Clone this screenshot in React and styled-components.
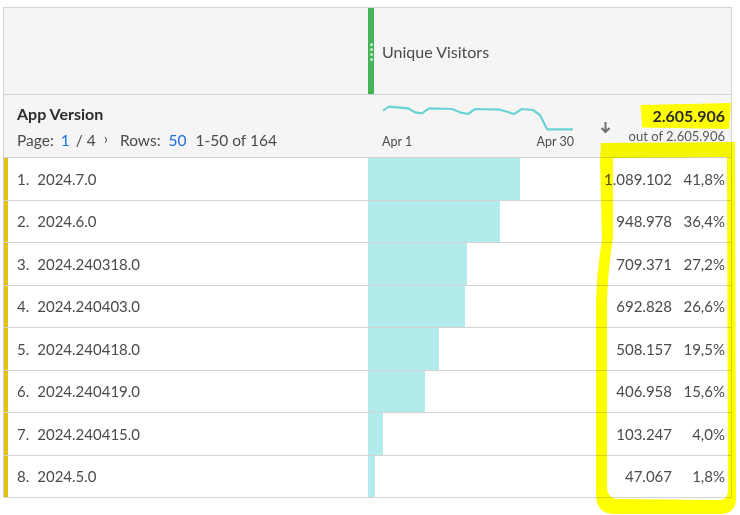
import React from "react";
import styled, { createGlobalStyle } from "styled-components";

const GlobalStyle = createGlobalStyle`
  html, body {
    margin: 0;
    padding: 0;
    background: #ffffff;
  }
  body {
    font-family: "Lato", "Open Sans", sans-serif;
    color: #4b4b4b;
  }
`;

const Page = styled.div`
  position: relative;
  width: 740px;
  height: 515px;
  padding: 7px 0 0 3px;
  box-sizing: border-box;
  overflow: hidden;
`;

const Table = styled.div`
  width: 729px;
  border: 1px solid #d3d3d3;
  border-bottom: none;
  box-sizing: border-box;
`;

const HeaderRow = styled.div`
  display: grid;
  grid-template-columns: 364px 1fr;
  height: ${(p) => p.$h}px;
  background: #f5f5f5;
  border-bottom: 1px solid #d3d3d3;
  box-sizing: content-box;
`;

const MetricTitle = styled.div`
  display: flex;
  align-items: center;
  border-left: 6px solid #44b556;
  position: relative;
  padding-left: 8px;
  font-size: 16px;
  color: #4b4b4b;
`;

const Grip = styled.span`
  position: absolute;
  left: -4px;
  top: 35px;
  display: flex;
  flex-direction: column;
  gap: 2px;

  i {
    display: block;
    width: 3px;
    height: 3px;
    border-radius: 50%;
    background: #c9ecce;
  }
`;

const DimensionCell = styled.div`
  display: flex;
  flex-direction: column;
  padding: 9px 0 0 13px;
  gap: 8px;
`;

const DimensionName = styled.div`
  font-size: 16px;
  font-weight: 700;
  color: #2c2c2c;
`;

const Pager = styled.div`
  font-size: 15.5px;
  color: #4b4b4b;
  display: flex;
  align-items: center;
  white-space: pre;
`;

const Link = styled.span`
  color: #1a6fe0;
  margin: ${(p) => p.$m || "0"};
`;

const Chevron = styled.span`
  font-size: 15px;
  margin: 0 12px 0 8px;
  position: relative;
  top: -2px;
`;

const TotalsCell = styled.div`
  display: flex;
  align-items: flex-start;
  padding: 0 6px 0 14px;
`;

const Spark = styled.div`
  width: 192px;
  display: flex;
  flex-direction: column;
  padding-top: 9px;
`;

const SparkDates = styled.div`
  display: flex;
  justify-content: space-between;
  font-size: 12.5px;
  color: #4b4b4b;
  margin-top: 3px;
`;

const SortArrow = styled.div`
  margin-left: 26px;
  margin-top: 26px;
  color: #6e6e6e;
  display: flex;
`;

const Totals = styled.div`
  margin-left: auto;
  display: flex;
  flex-direction: column;
  align-items: flex-end;
  padding-top: 8px;
`;

const TotalValue = styled.span`
  font-size: 16px;
  font-weight: 700;
  color: #2c2c2c;
  background: #ffff00;
  padding: 3px 6px 4px 12px;
  margin-right: -6px;
  clip-path: polygon(0 8%, 100% 0, 98% 100%, 2% 94%);
`;

const TotalOf = styled.span`
  font-size: 13px;
  color: #5a5a5a;
  margin-top: -1px;
`;

const Row = styled.div`
  display: grid;
  grid-template-columns: 364px 1fr;
  height: 42.5px;
  box-sizing: border-box;
  border-bottom: 1px solid #d3d3d3;
  background: #ffffff;
`;

const Label = styled.div`
  display: flex;
  align-items: center;
  border-left: 4px solid #e2c314;
  padding-left: 9px;
  font-size: 15px;
  color: #4b4b4b;
`;

const Ordinal = styled.span`
  margin-right: 8px;
`;

const ValueCell = styled.div`
  display: flex;
  align-items: stretch;
`;

const Bar = styled.div`
  flex: none;
  background: #b1ebeb;
`;

const Numbers = styled.div`
  margin-left: auto;
  display: flex;
  align-items: center;
  font-size: 15px;
  color: #4b4b4b;
  padding-right: 6px;
`;

const Percent = styled.span`
  width: 53px;
  text-align: right;
`;

const Overlay = styled.svg`
  position: absolute;
  left: 0;
  top: 0;
  pointer-events: none;
  mix-blend-mode: multiply;
`;

const rows = [
  ["2024.7.0", "1.089.102", 41.8],
  ["2024.6.0", "948.978", 36.4],
  ["2024.240318.0", "709.371", 27.2],
  ["2024.240403.0", "692.828", 26.6],
  ["2024.240418.0", "508.157", 19.5],
  ["2024.240419.0", "406.958", 15.6],
  ["2024.240415.0", "103.247", 4.0],
  ["2024.5.0", "47.067", 1.8],
];

const sparkPoints = [
  [1, 6.7], [7, 2.7], [26, 4.3], [33, 8.3], [40, 9.3], [47, 4.3], [70, 5],
  [78, 8.3], [86, 10], [93, 5], [118, 5.7], [125, 7.7], [132, 10], [140, 5],
  [151, 6], [158, 11], [165, 25.3], [191, 25.3],
];

const fmtPct = (v) => v.toFixed(1).replace(".", ",") + "%";

const App = () => {
  return (
    <>
      <GlobalStyle />
      <Page>
        <Table>
          <HeaderRow $h={86}>
            <div />
            <MetricTitle>
              <Grip>
                <i />
                <i />
                <i />
                <i />
              </Grip>
              Unique Visitors
            </MetricTitle>
          </HeaderRow>
          <HeaderRow $h={62}>
            <DimensionCell>
              <DimensionName>App Version</DimensionName>
              <Pager>
                Page:<Link $m="0 6px 0 7px">1</Link>/ 4<Chevron>›</Chevron>Rows:<Link $m="0 9px 0 8px">50</Link>1-50 of 164
              </Pager>
            </DimensionCell>
            <TotalsCell>
              <Spark>
                <svg width="192" height="27" viewBox="0 0 192 27">
                  <polyline
                    points={sparkPoints.map((p) => p.join(",")).join(" ")}
                    fill="none"
                    stroke="#6cd3d4"
                    strokeWidth="2.2"
                    strokeLinejoin="round"
                  />
                </svg>
                <SparkDates>
                  <span>Apr 1</span>
                  <span>Apr 30</span>
                </SparkDates>
              </Spark>
              <SortArrow>
                <svg width="11" height="13" viewBox="0 0 11 13">
                  <path d="M5.5 1v10M1.5 7l4 4 4-4" fill="none" stroke="#6e6e6e" strokeWidth="2" />
                </svg>
              </SortArrow>
              <Totals>
                <TotalValue>2.605.906</TotalValue>
                <TotalOf>out of 2.605.906</TotalOf>
              </Totals>
            </TotalsCell>
          </HeaderRow>
          {rows.map(([name, value, pct], i) => (
            <Row key={name}>
              <Label>
                <Ordinal>{i + 1}.</Ordinal>
                {name}
              </Label>
              <ValueCell>
                <Bar style={{ width: `${pct}%` }} />
                <Numbers>
                  <span>{value}</span>
                  <Percent>{fmtPct(pct)}</Percent>
                </Numbers>
              </ValueCell>
            </Row>
          ))}
        </Table>
        <Overlay width="740" height="515" viewBox="0 0 740 515">
          <path
            fillRule="evenodd"
            fill="#ffff00"
            d="M601 143 L735 142 L736 500 Q735 514 720 514 L612 514 Q596 512 596 495 L596 300 Q597 270 602 240 L600 160 Z
               M613 158 L727 157 L728 492 Q727 500 719 500 L616 499 Q607 497 607 487 L607 300 Q608 268 613 238 L613 166 Z"
          />
        </Overlay>
      </Page>
    </>
  );
};

export default App;
